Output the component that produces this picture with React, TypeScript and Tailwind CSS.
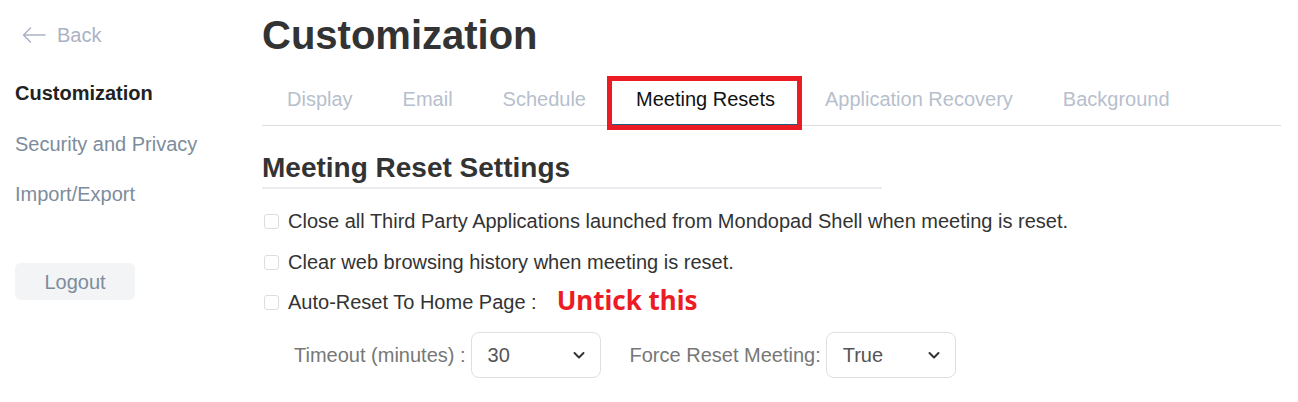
import React from "react";

const font = { fontFamily: '"Liberation Sans", Arial, sans-serif' };

function Chevron() {
  return (
    <svg width="14" height="14" viewBox="0 0 14 14" fill="none">
      <path d="M2.5 5 L7 9.5 L11.5 5" stroke="#333" strokeWidth="2" strokeLinecap="round" strokeLinejoin="round" />
    </svg>
  );
}

function Select({ value }: { value: string }) {
  return (
    <div className="flex h-[46px] w-[130px] items-center justify-between rounded-[8px] border border-[#dedfe3] bg-white pl-[16px] pr-[14px]">
      <span className="text-[20px] leading-[24px] text-[#555]">{value}</span>
      <Chevron />
    </div>
  );
}

function Check({ label, extra }: { label: string; extra?: React.ReactNode }) {
  return (
    <div className="flex h-[24px] items-center">
      <div className="ml-[2px] h-[15px] w-[15px] rounded-[3px] border border-[#dcdde3] bg-white" />
      <span className="ml-[9px] whitespace-nowrap text-[20px] leading-[24px] text-[#333]">{label}</span>
      {extra}
    </div>
  );
}

export default function App() {
  const tabs = ["Display", "Email", "Schedule", "Meeting Resets", "Application Recovery", "Background"];
  return (
    <div className="flex h-[402px] w-[1298px] bg-white" style={font}>
      <aside className="flex w-[262px] shrink-0 flex-col items-start pl-[15px] pt-[23px]">
        <div className="flex h-[24px] items-center text-[20px] leading-[24px] text-[#aab2c4]">
          <svg width="24" height="16" viewBox="0 0 24 16" fill="none" className="ml-[7px]">
            <path d="M23 8 H1.5 M8.5 1 L1.5 8 L8.5 15" stroke="#aab2c4" strokeWidth="1.5" strokeLinecap="round" strokeLinejoin="round" />
          </svg>
          <span className="ml-[11px]">Back</span>
        </div>
        <div className="mt-[34px] h-[24px] text-[20px] font-bold leading-[24px] text-[#222]">Customization</div>
        <div className="mt-[27px] h-[24px] text-[20px] leading-[24px] text-[#7d8c9c]">Security and Privacy</div>
        <div className="mt-[26px] h-[24px] text-[20px] leading-[24px] text-[#7d8c9c]">Import/Export</div>
        <div className="mt-[57px] flex h-[37px] w-[120px] items-center justify-center rounded-[6px] bg-[#f3f4f6] text-[20px] leading-[24px] text-[#7d8c9c]">
          Logout
        </div>
      </aside>
      <main className="flex-1 pr-[17px] pt-[11px]">
        <h1 className="text-[40px] font-bold leading-[48px] text-[#333]">Customization</h1>
        <div className="mt-[14px] flex border-b border-[#dcdde3]">
          {tabs.map((t) => {
            const active = t === "Meeting Resets";
            return (
              <div
                key={t}
                className={
                  active
                    ? "relative -mb-px border-b-2 border-[#1f5d7e] px-[25px] pb-[13px] pt-[14px] text-[20px] leading-[24px] text-[#111]"
                    : "relative -mb-px border-b-2 border-transparent px-[25px] pb-[13px] pt-[14px] text-[20px] leading-[24px] text-[#b7bfcd]"
                }
              >
                {t}
                {active && (
                  <div className="pointer-events-none absolute -bottom-[6px] -left-[4px] -right-[2px] top-[3px] border-[5px] border-[#ec1c24]" />
                )}
              </div>
            );
          })}
        </div>
        <h2 className="mt-[25px] w-[620px] border-b-2 border-[#ebecf0] pb-[2px] text-[28px] font-bold leading-[34px] text-[#333]">
          Meeting Reset Settings
        </h2>
        <div className="mt-[20px] flex flex-col">
          <Check label="Close all Third Party Applications launched from Mondopad Shell when meeting is reset." />
          <div className="mt-[17px]">
            <Check label="Clear web browsing history when meeting is reset." />
          </div>
          <div className="mt-[16px]">
            <Check
              label="Auto-Reset To Home Page :"
              extra={
                <span
                  className="relative -top-[2px] ml-[20px] text-[26px] font-bold leading-[24px] text-[#ec1c24]"
                  style={{ fontFamily: '"Noto Sans", "Open Sans", sans-serif' }}
                >
                  Untick this
                </span>
              }
            />
          </div>
          <div className="mt-[18px] flex items-center pl-[32px]">
            <span className="text-[20px] leading-[24px] text-[#777]">Timeout (minutes) :</span>
            <div className="ml-[5px]">
              <Select value="30" />
            </div>
            <span className="ml-[29px] text-[20px] leading-[24px] text-[#777]">Force Reset Meeting:</span>
            <div className="ml-[5px]">
              <Select value="True" />
            </div>
          </div>
        </div>
      </main>
    </div>
  );
}
